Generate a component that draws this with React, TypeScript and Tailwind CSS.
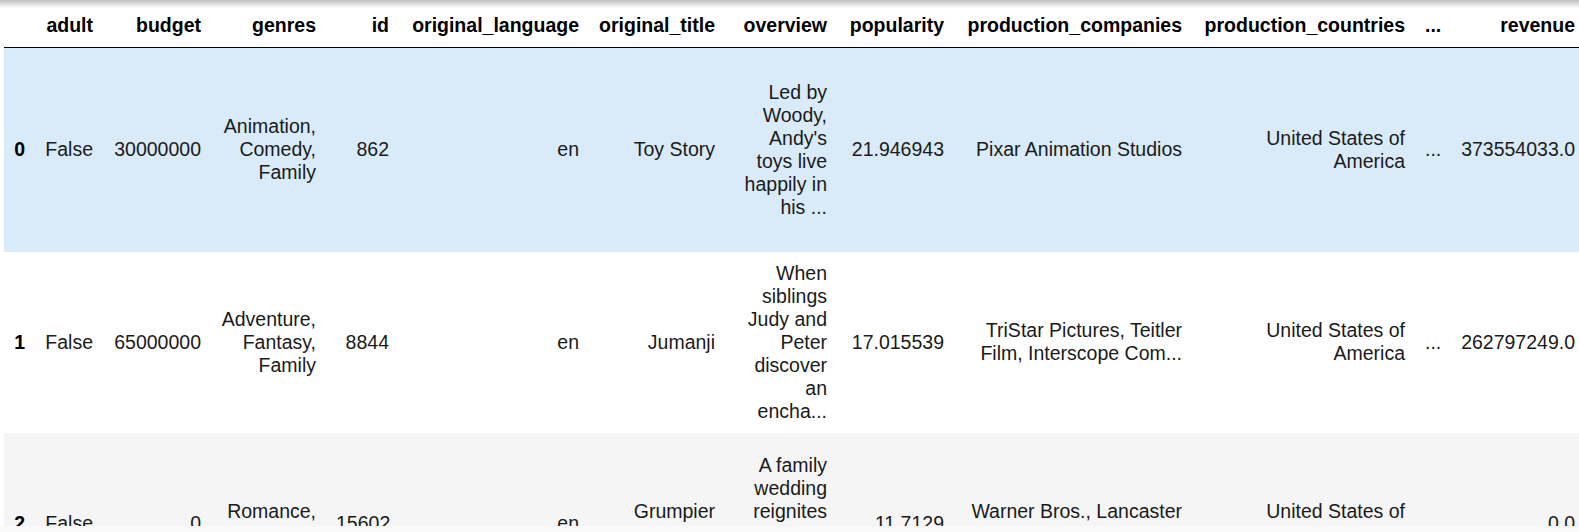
import React from 'react';

// column widths (px) incl. cell padding, left to right
const columns = [
  { key: 'idx', label: '', width: 'w-[31px]' },
  { key: 'adult', label: 'adult', width: 'w-[68px]' },
  { key: 'budget', label: 'budget', width: 'w-[108px]' },
  { key: 'genres', label: 'genres', width: 'w-[115px]' },
  { key: 'id', label: 'id', width: 'w-[73px]' },
  { key: 'original_language', label: 'original_language', width: 'w-[190px]' },
  { key: 'original_title', label: 'original_title', width: 'w-[136px]' },
  { key: 'overview', label: 'overview', width: 'w-[112px]' },
  { key: 'popularity', label: 'popularity', width: 'w-[117px]' },
  { key: 'production_companies', label: 'production_companies', width: 'w-[238px]' },
  { key: 'production_countries', label: 'production_countries', width: 'w-[223px]' },
  { key: 'more', label: '...', width: 'w-[36px]' },
  { key: 'revenue', label: 'revenue', width: 'w-[134px]' },
];

const rows = [
  {
    idx: '0',
    adult: 'False',
    budget: '30000000',
    genres: 'Animation, Comedy, Family',
    id: '862',
    original_language: 'en',
    original_title: 'Toy Story',
    overview: "Led by Woody, Andy's toys live happily in his ...",
    popularity: '21.946943',
    production_companies: 'Pixar Animation Studios',
    production_countries: 'United States of America',
    more: '...',
    revenue: '373554033.0',
    rowClass: 'bg-[#d9eaf9] h-[204px]',
  },
  {
    idx: '1',
    adult: 'False',
    budget: '65000000',
    genres: 'Adventure, Fantasy, Family',
    id: '8844',
    original_language: 'en',
    original_title: 'Jumanji',
    overview: 'When siblings Judy and Peter discover an encha...',
    popularity: '17.015539',
    production_companies: 'TriStar Pictures, Teitler Film, Interscope Com...',
    production_countries: 'United States of America',
    more: '...',
    revenue: '262797249.0',
    rowClass: 'bg-white h-[181px]',
  },
  {
    idx: '2',
    adult: 'False',
    budget: '0',
    genres: 'Romance, Comedy',
    id: '15602',
    original_language: 'en',
    original_title: 'Grumpier Old Men',
    overview: 'A family wedding reignites the ancient feud be...',
    popularity: '11.7129',
    production_companies: 'Warner Bros., Lancaster Gate',
    production_countries: 'United States of America',
    more: '...',
    revenue: '0.0',
    rowClass: 'bg-[#f5f5f5] h-[181px]',
  },
];

export default function App() {
  return (
    <div className="relative h-[532px] w-full overflow-hidden bg-white">
      <div className="pl-1 pt-1">
        <table className="table-fixed w-[1581px] border-collapse font-['Liberation_Sans',Arial,sans-serif] text-[19.5px] leading-[23px] text-[#1a1a1a]">
          <colgroup>
            {columns.map((c) => (
              <col key={c.key} className={c.width} />
            ))}
          </colgroup>
          <thead>
            <tr>
              {columns.map((c) => (
                <th
                  key={c.key}
                  className="px-[10px] py-[10px] text-right align-middle font-bold text-black whitespace-nowrap border-b border-black"
                >
                  {c.label}
                </th>
              ))}
            </tr>
          </thead>
          <tbody>
            {rows.map((r) => (
              <tr key={r.idx} className={r.rowClass}>
                <th className="px-[10px] py-[10px] text-right align-middle font-bold text-black">
                  {r.idx}
                </th>
                {columns.slice(1).map((c) => (
                  <td
                    key={c.key}
                    className="px-[10px] py-[10px] text-right align-middle"
                  >
                    {r[c.key as keyof typeof r]}
                  </td>
                ))}
              </tr>
            ))}
          </tbody>
        </table>
      </div>

      {/* scroll shadow at the top of the output area */}
      <div className="pointer-events-none absolute left-0 right-0 top-0 h-[8px] bg-linear-to-b from-black/25 to-transparent" />
      {/* horizontal scrollbar track */}
      <div className="absolute bottom-0 left-0 right-0 h-[6px] bg-[#f9f9f9]" />
    </div>
  );
}
